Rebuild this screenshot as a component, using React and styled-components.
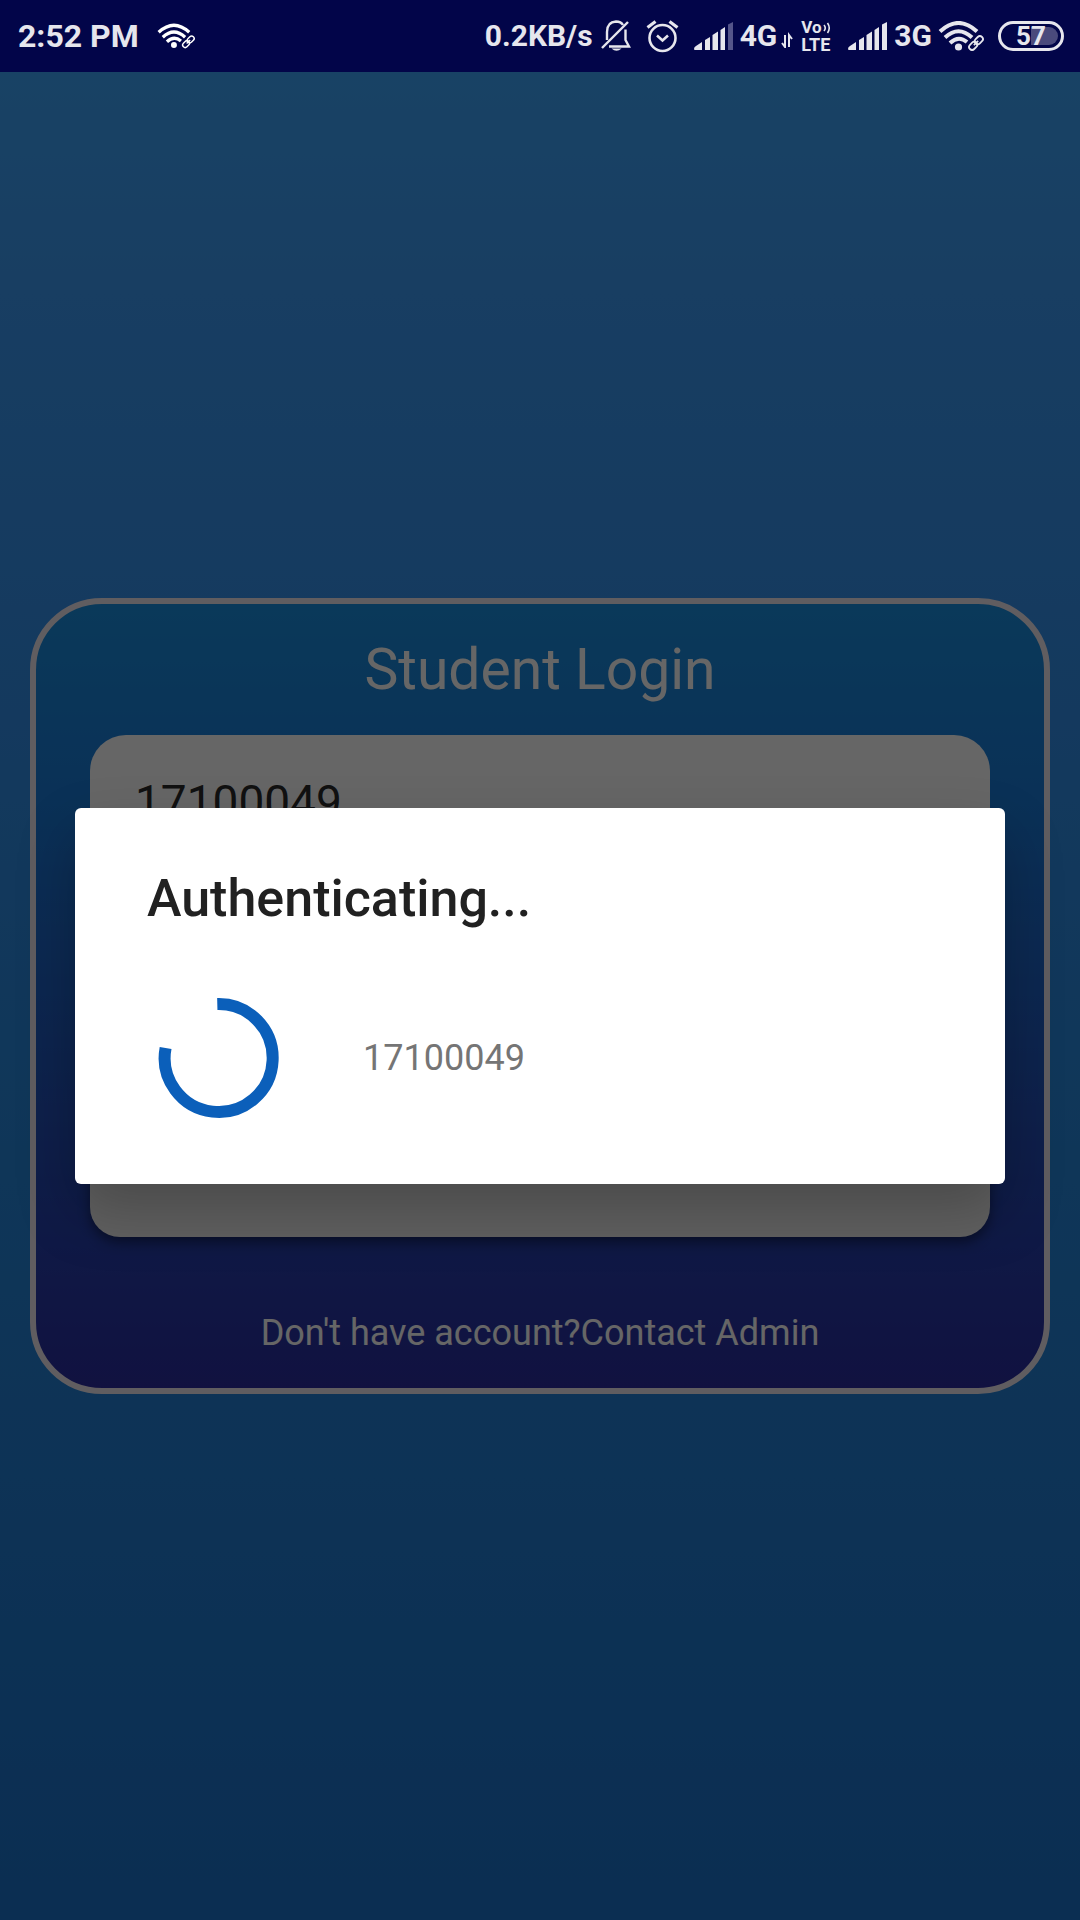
import React from "react";
import styled, { createGlobalStyle } from "styled-components";

const GlobalStyle = createGlobalStyle`
  * { box-sizing: border-box; }
  html, body, #root { height: 100%; }
  body {
    margin: 0;
    font-family: Roboto, "Noto Sans", sans-serif;
    background: #1c73cd;
  }
`;

const Screen = styled.div`
  display: flex;
  flex-direction: column;
  min-height: 100vh;
`;

const StatusBar = styled.header`
  display: flex;
  align-items: center;
  justify-content: space-between;
  height: 72px;
  padding: 0 16px 0 18px;
  background: #020549;
  color: #e6e6ed;
`;

const StatusGroup = styled.div`
  display: flex;
  align-items: center;
`;

const StatusText = styled.span`
  margin-left: ${(p) => p.$gap || 0}px;
  font-size: ${(p) => p.$size || 30}px;
  line-height: 36px;
  font-weight: 700;
  white-space: nowrap;
`;

const StatusIcon = styled.svg`
  display: block;
  flex: none;
  margin-left: ${(p) => p.$gap || 8}px;
`;

const Volte = styled.div`
  display: grid;
  grid-template-rows: 17px 17px;
  width: 32px;
  margin-left: 8px;
  font-weight: 700;
`;

const VolteRow = styled.span`
  display: flex;
  align-items: center;
  font-size: ${(p) => p.$size}px;
  line-height: 17px;
`;

const Battery = styled.div`
  display: flex;
  align-items: center;
  justify-content: center;
  width: 66px;
  height: 30px;
  margin-left: 14px;
  border: 3px solid #e6e6ed;
  border-radius: 15px;
  position: relative;
`;

const BatteryLevel = styled.div`
  position: absolute;
  inset: 3px 3px 3px 50%;
  border-radius: 0 9px 9px 0;
  background: #4a4a7c;
`;

const BatteryText = styled(StatusText)`
  position: relative;
`;

const Page = styled.main`
  position: relative;
  flex: 1;
  display: flex;
  flex-direction: column;
  justify-content: center;
  padding: 30px;
  background: linear-gradient(#3ca6fc, #3c9bf5 12%, #3592ee 29%, #2687dc 60%, #1c73cd);
`;

const Card = styled.form`
  display: flex;
  flex-direction: column;
  padding: 32px 54px 34px;
  border: 6px solid #f0e8f0;
  border-radius: 72px;
  background: linear-gradient(#1a8fe0, #1b78d8 28%, #2b2ca0);
`;

const CardTitle = styled.h1`
  margin: 0 0 31px;
  font-size: 57px;
  line-height: 68px;
  font-weight: 400;
  text-align: center;
  color: #fff;
`;

const Field = styled.input`
  height: 134px;
  margin: 0 0 34px;
  padding: 0 45px;
  border: 0;
  border-radius: 36px;
  background: #fff;
  color: #2b2b2b;
  font: 400 46px Roboto, sans-serif;
`;

const LoginButton = styled.button`
  height: 120px;
  margin: 46px 0 75px;
  border: 0;
  border-radius: 30px;
  background: #f3f3f3;
  box-shadow: 0 6px 12px rgba(0, 0, 0, 0.4);
`;

const Footnote = styled.p`
  margin: 0;
  font-size: 36px;
  line-height: 42px;
  text-align: center;
  color: #fff;
`;

const Scrim = styled.div`
  position: absolute;
  inset: 0;
  display: flex;
  align-items: center;
  padding: 0 75px;
  background: rgba(0, 0, 0, 0.6);
`;

const Dialog = styled.section`
  flex: 1;
  padding: 60px 72px 54px;
  border-radius: 6px;
  background: #fff;
  box-shadow: 0 28px 60px rgba(0, 0, 0, 0.24);
`;

const DialogTitle = styled.h2`
  margin: 0 0 56px;
  font-size: 52px;
  line-height: 62px;
  font-weight: 500;
  color: #212121;
`;

const Progress = styled.div`
  display: flex;
  align-items: center;
  gap: 72px;
  font-size: 36px;
  line-height: 42px;
  color: #757575;
`;

const Spinner = styled.svg`
  display: block;
  flex: none;
`;

function WifiLink({ width, height, gap, color }) {
  return (
    <StatusIcon $gap={gap} width={width} height={height} viewBox="0 0 46 30" fill="none" stroke={color} aria-hidden="true">
      <path d="M2 10.500Q20.500 -6.500 39 10.500" strokeWidth="4" />
      <path d="M7 16.500Q20.500 4 34 16.500" strokeWidth="4" />
      <path d="M12 22Q20.500 14 29 21" strokeWidth="4" />
      <circle cx="20.500" cy="26" r="3.600" fill={color} stroke="none" />
      <g transform="rotate(-45 38 22)" strokeWidth="1.800">
        <rect x="29.500" y="19" width="9" height="6" rx="3" />
        <rect x="37.500" y="19" width="9" height="6" rx="3" />
        <path d="M35 22h6" />
      </g>
    </StatusIcon>
  );
}

function Signal({ gap, weak }) {
  return (
    <StatusIcon $gap={gap} width="40" height="28" viewBox="0 0 40 28" fill="#e6e6ed" aria-hidden="true">
      <path d="M0 27Q0 25 2 24L8 20V28H1Q0 28 0 27Z" />
      <path d="M11 18L16 15V28H11Z" />
      <path d="M18.500 13L24 9.500V28H18.500Z" />
      <path d="M26.500 8L31 5V28H26.500Z" />
      <path d="M34 2.500L39 0V28H34Z" fill={weak ? "#54558a" : "#e6e6ed"} />
    </StatusIcon>
  );
}

export default function App() {
  return (
    <>
      <GlobalStyle />
      <Screen>
        <StatusBar>
          <StatusGroup>
            <StatusText $size={32}>2:52 PM</StatusText>
            <WifiLink width={38} height={26} gap={18} color="#fff" />
          </StatusGroup>
          <StatusGroup>
            <StatusText>0.2KB/s</StatusText>
            <StatusIcon $gap={8} width="30" height="32" viewBox="0 0 30 32" fill="none" stroke="#e6e6ed" strokeWidth="2.400" aria-hidden="true">
              <path d="M6 20V12Q6 2 15 1.500Q20 1.500 22 5" />
              <path d="M24.500 9.500V20L28 26.500H8" />
              <path d="M1 28L27 2" />
              <path d="M10.500 28.500H20.500Q15.500 33 10.500 28.500Z" fill="#e6e6ed" stroke="none" />
            </StatusIcon>
            <StatusIcon $gap={15} width="33" height="33" viewBox="0 0 33 33" fill="none" stroke="#e6e6ed" aria-hidden="true">
              <circle cx="16.500" cy="18" r="13" strokeWidth="2.600" />
              <path d="M11 15.500L16.500 20.500L22 15.500" strokeWidth="2.600" />
              <path d="M1.500 7.500L9.500 1.500M31.500 7.500L23.500 1.500" strokeWidth="3.200" />
            </StatusIcon>
            <Signal gap={15} weak />
            <StatusText $gap={6}>4G</StatusText>
            <StatusIcon $gap={4} width="12" height="24" viewBox="0 0 12 24" fill="none" stroke="#e6e6ed" strokeWidth="2" aria-hidden="true">
              <path d="M4 11V23L1 19M8 23V11L11 15" />
            </StatusIcon>
            <Volte>
              <VolteRow $size={17}>
                Vo
                <svg width="9" height="12" viewBox="0 0 9 12" fill="none" stroke="#e6e6ed" strokeWidth="1.600" aria-hidden="true">
                  <path d="M2 3Q4.500 6 2 9M5.500 1Q9 6 5.500 11" />
                </svg>
              </VolteRow>
              <VolteRow $size={18}>LTE</VolteRow>
            </Volte>
            <Signal gap={15} />
            <StatusText $gap={6}>3G</StatusText>
            <WifiLink width={46} height={30} gap={6} color="#e6e6ed" />
            <Battery>
              <BatteryLevel />
              <BatteryText $size={26}>57</BatteryText>
            </Battery>
          </StatusGroup>
        </StatusBar>
        <Page>
          <Card onSubmit={(e) => e.preventDefault()}>
            <CardTitle>Student Login</CardTitle>
            <Field aria-label="Student number" defaultValue="17100049" />
            <Field aria-label="Password" type="password" />
            <LoginButton aria-label="Login" />
            <Footnote>Don't have account?Contact Admin</Footnote>
          </Card>
          <Scrim>
            <Dialog role="dialog" aria-labelledby="dialog-title">
              <DialogTitle id="dialog-title">Authenticating...</DialogTitle>
              <Progress>
                <Spinner width="144" height="144" viewBox="0 0 144 144" fill="none" stroke="#0b5fba" strokeWidth="12" aria-hidden="true">
                  <path d="M70.300 18A54 54 0 1 1 18.600 62" />
                </Spinner>
                <span>17100049</span>
              </Progress>
            </Dialog>
          </Scrim>
        </Page>
      </Screen>
    </>
  );
}
